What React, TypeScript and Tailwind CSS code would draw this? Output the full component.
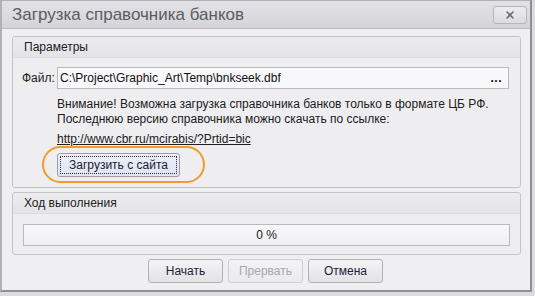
import { X } from "lucide-react";

function GroupBox({ title, children, className }: { title: string; children: React.ReactNode; className?: string }) {
  return (
    <div className={`rounded-[3px] border border-[#c4c4c8] bg-[#eeeef1] ${className ?? ""}`}>
      <div className="h-[21px] flex items-center px-[11px] border-b border-[#dcdce0] bg-gradient-to-b from-[#ececef] to-[#e4e4e8] rounded-t-[3px] text-[12px] text-[#202020]">
        {title}
      </div>
      {children}
    </div>
  );
}

export default function App() {
  return (
    <div
      className="w-[535px] h-[296px] bg-[#dcdce0] overflow-hidden"
      style={{ fontFamily: '"Liberation Sans", Arial, sans-serif' }}
    >
      <div className="w-[532px] h-[292px] border-l-2 border-t border-r-2 border-b-2 border-l-[#b0b0b5] border-t-[#b0b0b5] border-r-[#8e8e94] border-b-[#8e8e94] bg-[#efeff2] flex flex-col">
        {/* Title bar */}
        <div className="h-[28px] flex items-center justify-between pl-[10px] pr-[3px] bg-gradient-to-b from-[#e2e2e6] to-[#d4d4d9] border-b border-[#bcbcc1]">
          <span className="text-[17px] text-[#5c5c60]">Загрузка справочника банков</span>
          <button className="w-[34px] h-[18px] mt-[1px] flex items-center justify-center rounded-[3px] border border-[#b5b5ba] bg-gradient-to-b from-[#ececef] to-[#dcdce0]">
            <X size={12} strokeWidth={3.2} className="text-[#6a6a70]" />
          </button>
        </div>

        <div className="flex-1 flex flex-col pl-[10px] pr-[9px] pt-[7px]">
          <GroupBox title="Параметры" className="h-[152px]">
            <div className="flex items-center pt-[9px] pl-[9px] pr-[11px]">
              <span className="w-[35px] text-[12px] text-[#202020]">Файл:</span>
              <div className="flex-1 h-[22px] flex items-center justify-between border border-[#b9b9be] bg-[#f8f8fa] pl-[2px] pr-[6px] text-[12px] text-[#101010]">
                <span>C:\Project\Graphic_Art\Temp\bnkseek.dbf</span>
                <span className="font-bold tracking-[0.5px] leading-none">...</span>
              </div>
            </div>
            <div className="pl-[44px] pt-[8px] text-[12px] leading-[15px] text-[#202020]">
              <div>Внимание! Возможна загрузка справочника банков только в формате ЦБ РФ.</div>
              <div>Последнюю версию справочника можно скачать по ссылке:</div>
              <div className="mt-[5px] underline">http://www.cbr.ru/mcirabis/?Prtid=bic</div>
            </div>
            <div className="relative pl-[44px] pt-[5px]">
              <div className="absolute left-[29px] top-[-1px] w-[163px] h-[37px] rounded-[19px] border-[2px] border-[#f39a2c]" />
              <button className="relative w-[123px] h-[24px] rounded-[3px] border border-[#9c9ca2] bg-gradient-to-b from-[#eef0f8] to-[#dfe3f3] p-[2px]">
                <div className="h-full border border-dotted border-[#303030] flex items-center justify-center text-[12px] text-[#202030]">
                  Загрузить с сайта
                </div>
              </button>
            </div>
          </GroupBox>

          <GroupBox title="Ход выполнения" className="mt-[4px] h-[63px]">
            <div className="px-[10px] pt-[10px]">
              <div className="h-[22px] border border-[#b9b9be] bg-gradient-to-b from-[#f8f8fa] to-[#f0f0f3] flex items-center justify-center text-[12px] text-[#202020]">
                0 %
              </div>
            </div>
          </GroupBox>

          <div className="flex justify-center gap-[5px] pt-[4px] pr-[2px]">
            <button className="w-[75px] h-[24px] rounded-[3px] border border-[#b0b0b5] bg-gradient-to-b from-[#f4f4f6] to-[#e2e2e6] text-[12px] text-[#1e1e38]">
              Начать
            </button>
            <button className="w-[75px] h-[24px] rounded-[3px] border border-[#cfcfd3] bg-gradient-to-b from-[#f3f3f5] to-[#eaeaed] text-[12px] text-[#a8a8ac]">
              Прервать
            </button>
            <button className="w-[75px] h-[24px] rounded-[3px] border border-[#b0b0b5] bg-gradient-to-b from-[#f4f4f6] to-[#e2e2e6] text-[12px] text-[#1e1e38]">
              Отмена
            </button>
          </div>
        </div>
      </div>
    </div>
  );
}
